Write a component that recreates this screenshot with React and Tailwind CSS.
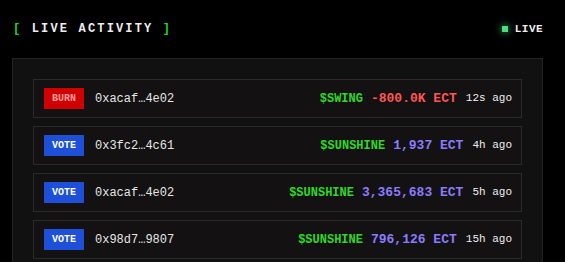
import React from 'react';

const events = [
    { kind: 'BURN', addr: '0xacaf…4e02', token: '$SWING', amount: '-800.0K ECT', time: '12s ago' },
    { kind: 'VOTE', addr: '0x3fc2…4c61', token: '$SUNSHINE', amount: '1,937 ECT', time: '4h ago' },
    { kind: 'VOTE', addr: '0xacaf…4e02', token: '$SUNSHINE', amount: '3,365,683 ECT', time: '5h ago' },
    { kind: 'VOTE', addr: '0x98d7…9807', token: '$SUNSHINE', amount: '796,126 ECT', time: '15h ago' },
];

const mono = { fontFamily: '"Liberation Mono", "Courier New", monospace' };

const App = () => {
    return (
        <div className="min-h-[262px] bg-black text-[#e8e8e8]" style={mono}>
            <div className="ml-3 w-[531px]">
                {/* Header */}
                <div className="h-[58px] flex items-center justify-between">
                    <h2 className="pl-px text-[12px] font-bold tracking-[0.18em] text-[#eeeeee]">
                        <span className="text-[#22d42a]">[</span> LIVE ACTIVITY <span className="text-[#22d42a]">]</span>
                    </h2>
                    <div className="flex items-center gap-[7px]">
                        <span className="w-[6px] h-[6px] bg-[#4ade80] shadow-[0_0_6px_2px_rgba(74,222,128,0.35)]" />
                        <span className="text-[11px] font-bold tracking-[0.04em] text-[#eeeeee]">LIVE</span>
                    </div>
                </div>

                {/* Feed */}
                <div className="bg-[#111111] border border-[#222222] p-5 flex flex-col gap-2">
                    {events.map((e, i) => (
                        <div
                            key={i}
                            className="h-[39px] bg-[#131111] border border-[#2a2a2a] flex items-center pl-[10px] pr-[9px]"
                        >
                            <span
                                className={`w-10 h-[21px] flex items-center justify-center text-[10px] font-bold ${e.kind === 'BURN'
                                    ? 'bg-[#d00000] text-[#ff9a9a]'
                                    : 'bg-[#1d4fd8] text-white'
                                    }`}
                            >
                                {e.kind}
                            </span>
                            <span className="ml-[11px] text-[12px] text-[#e6e6e6]">{e.addr}</span>
                            <div className="ml-auto flex items-center">
                                <span className="text-[12px] font-bold text-[#2ed82a]">{e.token}</span>
                                <span
                                    className={`ml-2 text-[13px] font-bold ${e.kind === 'BURN' ? 'text-[#ff5555]' : 'text-[#8a7cff]'}`}
                                >
                                    {e.amount}
                                </span>
                                <span className="ml-[9px] text-[11px] text-[#eeeeee]">{e.time}</span>
                            </div>
                        </div>
                    ))}
                </div>
            </div>
        </div>
    );
};

export default App;
